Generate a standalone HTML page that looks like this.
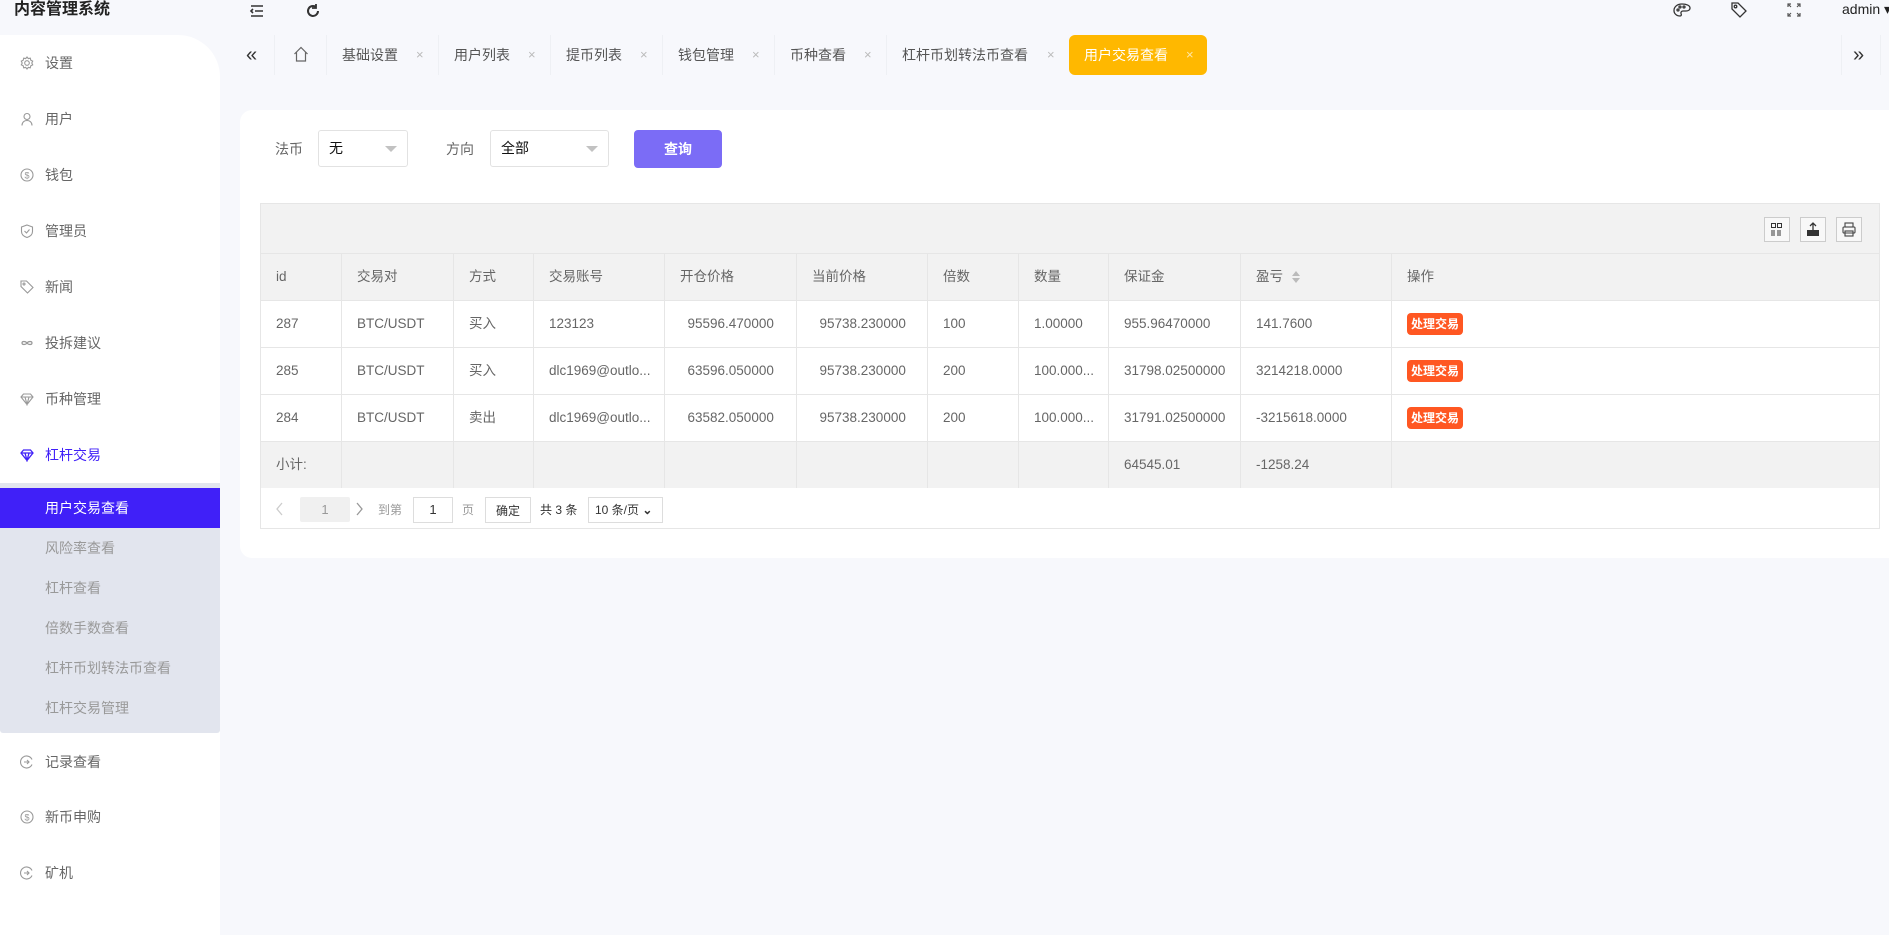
<!DOCTYPE html>
<html><head><meta charset="utf-8"><style>
*{margin:0;padding:0;box-sizing:border-box}
body{width:1889px;height:882px;overflow:hidden;background:#f7f8fc;font-family:"Liberation Sans","Noto Sans CJK SC",sans-serif;font-size:14px;color:#333;position:relative}
.abs{position:absolute}
.title{left:14px;top:0;font-size:16px;font-weight:bold;color:#222;line-height:20px}
.side{left:0;top:35px;width:220px;height:900px;background:#fff;border-top-right-radius:42px}
.mi{position:absolute;left:0;width:220px;height:20px;line-height:20px;color:#666;font-size:14px}
.mi svg{position:absolute;left:20px;top:3px}
.mi span{position:absolute;left:45px}
.sub{position:absolute;left:0;top:483px;width:220px;height:250px;background:#e2e5ee;border-radius:0 0 3px 3px}
.si{position:absolute;left:0;width:220px;height:40px;line-height:40px;padding-left:45px;color:#999;font-size:14px}
.tab{position:absolute;top:35px;height:40px;line-height:40px;color:#555;font-size:14px;white-space:nowrap}
.x{color:#bbb;font-size:13px;position:absolute}
.sep{position:absolute;top:35px;width:1px;height:40px;background:#eef0f4}
.card{left:240px;top:110px;width:1660px;height:448px;background:#fff;border-radius:12px}
.sel{position:absolute;top:130px;height:37px;border:1px solid #e2e2e2;border-radius:3px;background:#fff;line-height:35px;padding-left:10px;color:#111}
.sel:after{content:"";position:absolute;right:10px;top:15px;border:6px solid transparent;border-top:6px solid #c2c2c2}
table{position:absolute;left:260px;top:253px;border-collapse:collapse;width:1620px}
td{border:1px solid #e6e6e6;height:47px;padding-left:15px;color:#666;font-size:13.5px;white-space:nowrap;line-height:16px}
tr.h td,tr.s td{background:#f2f2f2}
.b{display:inline-block;background:#ff5722;color:#fff;font-size:12px;font-weight:bold;border-radius:4px;padding:0 4px;line-height:22px}
.tb{position:absolute;top:217px;width:26px;height:25px;border:1px solid #ccc;background:#f8f8f8}
</style></head><body>
<div class="abs title">内容管理系统</div>
<svg class="abs" style="left:249px;top:3px" width="16" height="16" viewBox="0 0 16 16" fill="none" stroke="#333" stroke-width="1.6"><path d="M2 3h12M6 8h8M2 13h12M4 6l-2 2 2 2"/></svg>
<svg class="abs" style="left:305px;top:3px" width="16" height="16" viewBox="0 0 16 16" fill="none" stroke="#333" stroke-width="2"><path d="M13 8a5 5 0 1 1-2-4"/><path d="M11 1v4h-4" stroke-width="1.8"/></svg>
<svg class="abs" style="left:1673px;top:2px" width="18" height="16" viewBox="0 0 18 16" fill="none" stroke="#333" stroke-width="1.3"><path d="M9 2C4 2 1 5 1 8.5S4 14 7 14c1.5 0 1.5-1.5 1-2.5S8.5 9 10 9h3c2 0 4-1 4-3 0-2.5-3.5-4-8-4z"/><circle cx="5" cy="8" r="1"/><circle cx="7" cy="5" r="1"/><circle cx="11" cy="5" r="1"/></svg>
<svg class="abs" style="left:1730px;top:1px" width="17" height="17" viewBox="0 0 17 17" fill="none" stroke="#333" stroke-width="1.3"><path d="M2 2h6l8 8-6 6-8-8z"/><circle cx="5.5" cy="5.5" r="1.3"/></svg>
<svg class="abs" style="left:1787px;top:3px" width="14" height="14" viewBox="0 0 14 14" fill="none" stroke="#555" stroke-width="1.2"><path d="M1 4V1h3M10 1h3v3M13 10v3h-3M4 13H1v-3M1 1l3 3M13 1l-3 3M13 13l-3-3M1 13l3-3"/></svg>
<div class="abs" style="left:1842px;top:1px;font-size:14px;color:#222;white-space:nowrap">admin ▾</div>

<div class="abs side"></div>
<div class="abs" style="left:0;top:0">
<div class="mi" style="top:53px"><svg width="14" height="14" viewBox="0 0 14 14" fill="none" stroke="#999" stroke-width="1.1"><circle cx="7" cy="7" r="2.3"/><path d="M7 1l1.3 1.6 2-.4.5 2 1.9.9-.9 1.9.9 1.9-1.9.9-.5 2-2-.4L7 13l-1.3-1.6-2 .4-.5-2-1.9-.9.9-1.9-.9-1.9 1.9-.9.5-2 2 .4z"/></svg><span>设置</span></div>
<div class="mi" style="top:109px"><svg width="14" height="14" viewBox="0 0 14 14" fill="none" stroke="#999" stroke-width="1.1"><circle cx="7" cy="4.5" r="3"/><path d="M2 13.5c0-3 2-5 5-5s5 2 5 5"/></svg><span>用户</span></div>
<div class="mi" style="top:165px"><svg width="14" height="14" viewBox="0 0 14 14" fill="none" stroke="#999" stroke-width="1.1"><circle cx="7" cy="7" r="6"/><text x="7" y="10.5" font-size="9" text-anchor="middle" fill="#999" stroke="none">$</text></svg><span>钱包</span></div>
<div class="mi" style="top:221px"><svg width="14" height="14" viewBox="0 0 14 14" fill="none" stroke="#999" stroke-width="1.1"><path d="M7 1l5.5 2v4.5C12.5 10.5 10 12.5 7 13.5 4 12.5 1.5 10.5 1.5 7.5V3z"/><path d="M4.5 7l2 2 3-3.5"/></svg><span>管理员</span></div>
<div class="mi" style="top:277px"><svg width="14" height="14" viewBox="0 0 14 14" fill="none" stroke="#999" stroke-width="1.1"><path d="M1 1h5.5l6.5 6.5-5.5 5.5L1 6.5z"/><circle cx="4" cy="4" r="1"/></svg><span>新闻</span></div>
<div class="mi" style="top:333px"><svg width="14" height="14" viewBox="0 0 14 14" fill="none" stroke="#999" stroke-width="1.2"><path d="M7 7c-1.5-2-5-2-5 0s3.5 2 5 0 5-2 5 0-3.5 2-5 0z"/></svg><span>投拆建议</span></div>
<div class="mi" style="top:389px"><svg width="14" height="14" viewBox="0 0 14 14" fill="none" stroke="#999" stroke-width="1.1"><path d="M1 5l2.5-3h7L13 5 7 12.5z M1 5h12M5 5l2 7.5L9 5"/></svg><span>币种管理</span></div>
<div class="mi" style="top:445px;color:#4020f8"><svg width="14" height="14" viewBox="0 0 14 14" fill="none" stroke="#4020f8" stroke-width="1.3"><path d="M1 5l2.5-3h7L13 5 7 12.5z M1 5h12M5 5l2 7.5L9 5"/></svg><span>杠杆交易</span></div>
<div class="sub">
<div class="si" style="top:5px;background:#4020f8;color:#fff">用户交易查看</div>
<div class="si" style="top:45px">风险率查看</div>
<div class="si" style="top:85px">杠杆查看</div>
<div class="si" style="top:125px">倍数手数查看</div>
<div class="si" style="top:165px">杠杆币划转法币查看</div>
<div class="si" style="top:205px">杠杆交易管理</div>
</div>
<div class="mi" style="top:752px"><svg width="14" height="14" viewBox="0 0 14 14" fill="none" stroke="#999" stroke-width="1.1"><path d="M12 4.5A6 6 0 1 0 12 9.5"/><path d="M4 7h5M7 5l2 2-2 2"/></svg><span>记录查看</span></div>
<div class="mi" style="top:807px"><svg width="14" height="14" viewBox="0 0 14 14" fill="none" stroke="#999" stroke-width="1.1"><circle cx="7" cy="7" r="6"/><text x="7" y="10.5" font-size="9" text-anchor="middle" fill="#999" stroke="none">$</text></svg><span>新币申购</span></div>
<div class="mi" style="top:863px"><svg width="14" height="14" viewBox="0 0 14 14" fill="none" stroke="#999" stroke-width="1.1"><path d="M12 4.5A6 6 0 1 0 12 9.5"/><path d="M4 7h5M7 5l2 2-2 2"/></svg><span>矿机</span></div>
</div>

<div class="tab" style="left:246px;font-size:20px;color:#333">«</div>
<div class="sep" style="left:274px"></div>
<svg class="abs" style="left:293px;top:46px" width="16" height="16" viewBox="0 0 16 16" fill="none" stroke="#666" stroke-width="1.2"><path d="M1.5 8L8 1.5 14.5 8M3.5 6v9h9V6"/></svg>
<div class="sep" style="left:326px"></div>
<div class="tab" style="left:342px">基础设置</div><div class="x tab" style="left:416px;color:#bbb">×</div>
<div class="sep" style="left:438px"></div>
<div class="tab" style="left:454px">用户列表</div><div class="x tab" style="left:528px;color:#bbb">×</div>
<div class="sep" style="left:550px"></div>
<div class="tab" style="left:566px">提币列表</div><div class="x tab" style="left:640px;color:#bbb">×</div>
<div class="sep" style="left:662px"></div>
<div class="tab" style="left:678px">钱包管理</div><div class="x tab" style="left:752px;color:#bbb">×</div>
<div class="sep" style="left:774px"></div>
<div class="tab" style="left:790px">币种查看</div><div class="x tab" style="left:864px;color:#bbb">×</div>
<div class="sep" style="left:886px"></div>
<div class="tab" style="left:902px">杠杆币划转法币查看</div><div class="x tab" style="left:1047px;color:#bbb">×</div>
<div class="abs" style="left:1069px;top:35px;width:138px;height:40px;background:#ffb800;border-radius:6px"></div>
<div class="tab" style="left:1084px;color:#fff">用户交易查看</div><div class="x tab" style="left:1186px;color:#ffe7a8">×</div>
<div class="sep" style="left:1841px"></div>
<div class="tab" style="left:1853px;font-size:20px;color:#333">»</div>
<div class="sep" style="left:1880px"></div>

<div class="abs card"></div>
<div class="abs" style="left:275px;top:139px;color:#666">法币</div>
<div class="sel" style="left:318px;width:90px">无</div>
<div class="abs" style="left:446px;top:139px;color:#666">方向</div>
<div class="sel" style="left:490px;width:119px">全部</div>
<div class="abs" style="left:634px;top:130px;width:88px;height:38px;background:#7b6cf6;border-radius:4px;color:#fff;text-align:center;line-height:38px;font-weight:bold">查询</div>

<div class="abs" style="left:260px;top:203px;width:1620px;height:51px;background:#f2f2f2;border:1px solid #e6e6e6;border-bottom:none"></div>
<div class="tb" style="left:1764px"><svg width="24" height="23" viewBox="0 0 24 23" fill="none" stroke="#333" stroke-width="1"><rect x="6.5" y="5.5" width="4" height="4"/><rect x="12.5" y="5.5" width="4" height="4"/><path d="M7 12v6M9 12v6M13 12v6M15 12v6"/></svg></div>
<div class="tb" style="left:1800px"><svg width="24" height="23" viewBox="0 0 24 23"><rect x="6" y="12" width="12" height="6" fill="#333"/><path d="M12 12V5M9 8l3-3 3 3" stroke="#333" fill="none" stroke-width="1.3"/></svg></div>
<div class="tb" style="left:1836px"><svg width="24" height="23" viewBox="0 0 24 23" fill="none" stroke="#444" stroke-width="1.1"><rect x="8" y="5" width="8" height="4"/><rect x="6" y="9" width="12" height="6" rx="1"/><rect x="8" y="13" width="8" height="5"/></svg></div>

<table>
<colgroup><col style="width:81px"><col style="width:112px"><col style="width:80px"><col style="width:131px"><col style="width:132px"><col style="width:131px"><col style="width:91px"><col style="width:90px"><col style="width:132px"><col style="width:151px"><col></colgroup>
<tr class="h"><td>id</td><td>交易对</td><td>方式</td><td>交易账号</td><td>开仓价格</td><td>当前价格</td><td>倍数</td><td>数量</td><td>保证金</td><td>盈亏 <svg width="10" height="14" viewBox="0 0 10 14" style="vertical-align:middle;margin-left:4px"><path d="M5 1l4 5H1zM5 13l4-5H1z" fill="#bbb"/></svg></td><td>操作</td></tr>
<tr><td>287</td><td>BTC/USDT</td><td>买入</td><td>123123</td><td>&nbsp;&nbsp;95596.470000</td><td>&nbsp;&nbsp;95738.230000</td><td>100</td><td>1.00000</td><td>955.96470000</td><td>141.7600</td><td><span class="b">处理交易</span></td></tr>
<tr><td>285</td><td>BTC/USDT</td><td>买入</td><td>dlc1969@outlo...</td><td>&nbsp;&nbsp;63596.050000</td><td>&nbsp;&nbsp;95738.230000</td><td>200</td><td>100.000...</td><td>31798.02500000</td><td>3214218.0000</td><td><span class="b">处理交易</span></td></tr>
<tr><td>284</td><td>BTC/USDT</td><td>卖出</td><td>dlc1969@outlo...</td><td>&nbsp;&nbsp;63582.050000</td><td>&nbsp;&nbsp;95738.230000</td><td>200</td><td>100.000...</td><td>31791.02500000</td><td>-3215618.0000</td><td><span class="b">处理交易</span></td></tr>
<tr class="s"><td>小计:</td><td></td><td></td><td></td><td></td><td></td><td></td><td></td><td>64545.01</td><td>-1258.24</td><td></td></tr>
</table>
<div class="abs" style="left:260px;top:488px;width:1620px;height:41px;border:1px solid #e6e6e6;border-top:none;background:#fff"></div>
<svg class="abs" style="left:276px;top:502px" width="8" height="14" viewBox="0 0 8 14" fill="none" stroke="#ccc" stroke-width="1.3"><path d="M6 1L1 7l5 6"/></svg>
<div class="abs" style="left:300px;top:497px;width:50px;height:25px;background:#f0f0f0;border-radius:2px;color:#999;text-align:center;line-height:25px;font-size:13px">1</div>
<svg class="abs" style="left:355px;top:502px" width="8" height="14" viewBox="0 0 8 14" fill="none" stroke="#999" stroke-width="1.3"><path d="M2 1l5 6-5 6"/></svg>
<div class="abs" style="left:378px;top:501px;color:#999;font-size:12px">到第</div>
<div class="abs" style="left:413px;top:497px;width:40px;height:26px;border:1px solid #ddd;text-align:center;line-height:24px;font-size:13px;color:#333">1</div>
<div class="abs" style="left:462px;top:501px;color:#999;font-size:12px">页</div>
<div class="abs" style="left:485px;top:497px;width:46px;height:26px;border:1px solid #ddd;text-align:center;line-height:26px;font-size:12px;color:#333">确定</div>
<div class="abs" style="left:540px;top:501px;color:#333;font-size:12px">共 3 条</div>
<div class="abs" style="left:588px;top:497px;width:75px;height:26px;border:1px solid #ddd;line-height:24px;font-size:12px;color:#333;padding-left:6px;white-space:nowrap">10 条/页 <b>⌄</b></div>
</body></html>
